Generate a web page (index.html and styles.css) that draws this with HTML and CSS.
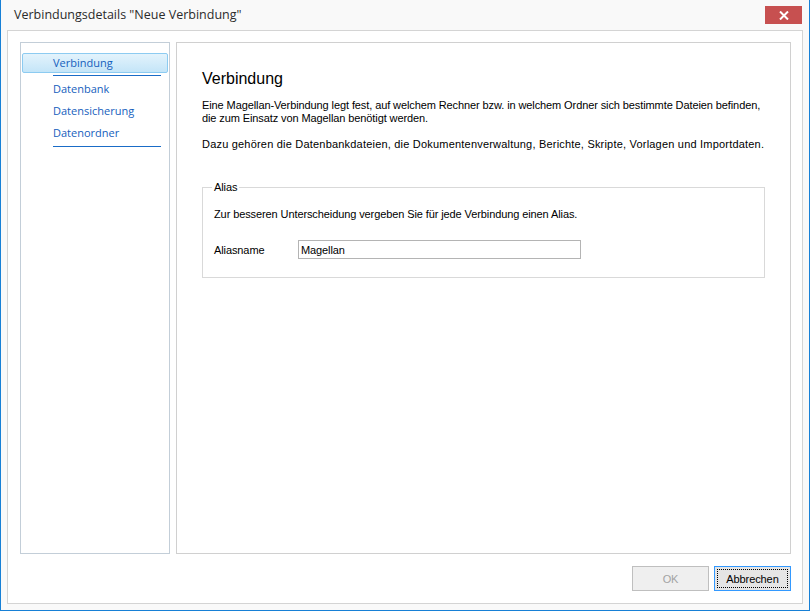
FILE: index.html
```html
<!DOCTYPE html>
<html>

<head>
    <meta charset="UTF-8">
    <title>Verbindungsdetails</title>
    <link rel="stylesheet" href="styles.css">
</head>

<body>
    <div class="fenster">
        <!-- Titelleiste -->
        <div class="titelleiste">
            <span class="titel">Verbindungsdetails "Neue Verbindung"</span>
            <button class="schliessen" type="button">
                <svg width="10" height="9" viewBox="0 0 10 9">
                    <path d="M1 0.5 L9 8.5 M9 0.5 L1 8.5" stroke="#fff" stroke-width="2"/>
                </svg>
            </button>
        </div>

        <div class="rahmen">
            <div class="hauptbereich">
                <!-- Navigation -->
                <div class="navigation">
                    <div class="nav-eintrag aktiv">Verbindung</div>
                    <div class="nav-linie"></div>
                    <div class="nav-eintrag">Datenbank</div>
                    <div class="nav-eintrag">Datensicherung</div>
                    <div class="nav-eintrag">Datenordner</div>
                    <div class="nav-linie"></div>
                </div>

                <!-- Inhalt -->
                <div class="inhalt">
                    <h1>Verbindung</h1>
                    <p>Eine Magellan-Verbindung legt fest, auf welchem Rechner bzw. in welchem Ordner sich bestimmte Dateien befinden,<br>die zum Einsatz von Magellan benötigt werden.</p>
                    <p class="weit">Dazu gehören die Datenbankdateien, die Dokumentenverwaltung, Berichte, Skripte, Vorlagen und Importdaten.</p>

                    <fieldset class="gruppe">
                        <legend>Alias</legend>
                        <div class="hinweis">Zur besseren Unterscheidung vergeben Sie für jede Verbindung einen Alias.</div>
                        <div class="zeile">
                            <label for="alias">Aliasname</label>
                            <input type="text" id="alias" name="alias" value="Magellan">
                        </div>
                    </fieldset>
                </div>
            </div>

            <!-- Schaltflächen -->
            <div class="fussleiste">
                <button class="knopf" type="button" disabled>OK</button>
                <button class="knopf standard" type="button"><span>Abbrechen</span></button>
            </div>
        </div>
    </div>
</body>

</html>
```

FILE: styles.css
```css
body {
    margin: 0;
    padding: 0;
    font-family: "Liberation Sans", Arial, sans-serif;
    font-size: 11px;
    letter-spacing: -0.1px;
    color: #000;
}

.fenster {
    width: 810px;
    height: 611px;
    box-sizing: border-box;
    background-color: #f9f9f9;
    border: 1px solid #1780d6;
    border-top: none;
    display: flex;
    flex-direction: column;
}

.titelleiste {
    height: 30px;
    display: flex;
    align-items: flex-start;
    justify-content: space-between;
    flex-shrink: 0;
}

.titel {
    font-family: "Open Sans", sans-serif;
    font-size: 12.5px;
    letter-spacing: 0;
    color: #2b2b2b;
    margin: 6px 0 0 13px;
}

.schliessen {
    width: 37px;
    height: 18px;
    margin: 6px 7px 0 0;
    padding: 0;
    border: none;
    background-color: #c75050;
    display: flex;
    align-items: center;
    justify-content: center;
}

.rahmen {
    flex: 1;
    margin: 0 6px 6px 6px;
    border: 1px solid #d4d4d4;
    background-color: #fff;
    display: flex;
    flex-direction: column;
}

.hauptbereich {
    height: 512px;
    padding: 11px 11px 0 12px;
    display: flex;
    gap: 6px;
}

.navigation {
    width: 150px;
    box-sizing: border-box;
    border: 1px solid #c3ced8;
    padding-top: 10px;
}

.nav-eintrag {
    font-family: "Open Sans", sans-serif;
    font-size: 11px;
    letter-spacing: 0;
    color: #1560bd;
    height: 22px;
    line-height: 22px;
    padding-left: 32px;
}

.nav-eintrag.aktiv {
    height: 18px;
    line-height: 18px;
    margin: 0 1px 0 1px;
    padding-left: 30px;
    border: 1px solid #8ccbf1;
    border-radius: 2px;
    background: linear-gradient(#e3f3fc, #c4e5f8);
}

.nav-linie {
    height: 1px;
    width: 108px;
    margin: 2px 0 2px 32px;
    background-color: #1a6cc7;
}

.inhalt {
    flex: 1;
    border: 1px solid #d0d0d0;
    padding: 26px 25px 0 25px;
}

h1 {
    font-size: 16px;
    font-weight: normal;
    letter-spacing: 0;
    line-height: 19px;
    margin: 0 0 11px 0;
}

p {
    line-height: 13px;
    margin: 0 0 13px 0;
    white-space: nowrap;
}

p.weit {
    letter-spacing: 0.2px;
}

.gruppe {
    margin: 30px 0 0 0;
    border: 1px solid #d9d9d9;
    padding: 0 11px 18px 11px;
}

.gruppe legend {
    padding: 0 2px;
    margin-left: -2px;
    line-height: 13px;
}

.hinweis {
    line-height: 13px;
    margin-top: 14px;
}

.zeile {
    display: flex;
    align-items: center;
    margin-top: 19px;
}

.zeile label {
    width: 84px;
}

.zeile input {
    width: 283px;
    height: 19px;
    box-sizing: border-box;
    border: 1px solid #b4b4b4;
    padding: 0 2px;
    font-family: "Liberation Sans", Arial, sans-serif;
    font-size: 11px;
    letter-spacing: -0.1px;
    color: #000;
    outline: none;
}

.fussleiste {
    flex: 1;
    display: flex;
    justify-content: flex-end;
    align-items: flex-start;
    gap: 5px;
    padding: 12px 11px 0 0;
}

.knopf {
    width: 77px;
    height: 25px;
    padding: 0;
    border: 1px solid #adadad;
    background-color: #e5e5e5;
    font-family: "Liberation Sans", Arial, sans-serif;
    font-size: 11px;
    letter-spacing: -0.1px;
    color: #000;
}

.knopf:disabled {
    border-color: #bfbfbf;
    background-color: #efefef;
    color: #a3a3a3;
}

.knopf.standard {
    border-color: #3399ff;
    padding: 2px;
}

.knopf.standard span {
    display: flex;
    height: 100%;
    align-items: center;
    justify-content: center;
    box-sizing: border-box;
    border: 1px dotted #000;
}
```
